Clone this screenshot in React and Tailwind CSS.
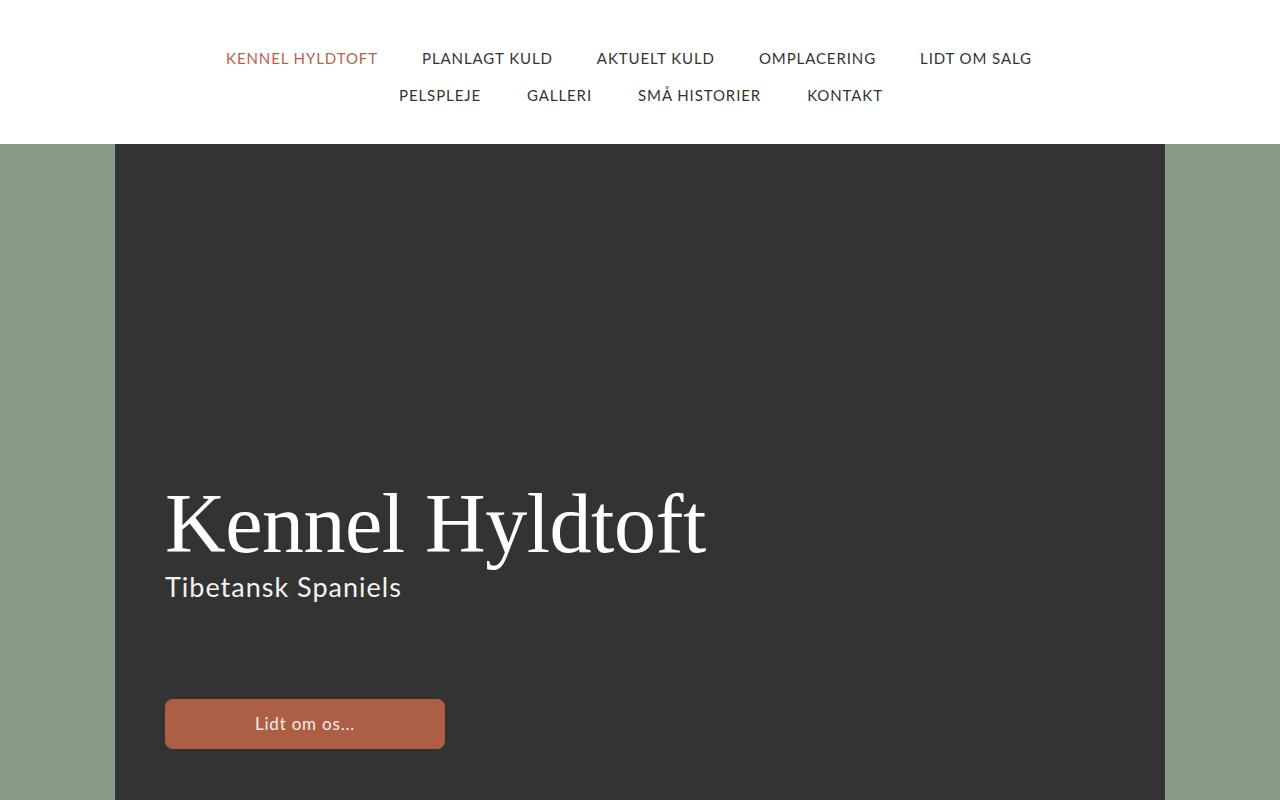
import React from 'react';

const row1 = ['KENNEL HYLDTOFT', 'PLANLAGT KULD', 'AKTUELT KULD', 'OMPLACERING', 'LIDT OM SALG'];
const row2 = ['PELSPLEJE', 'GALLERI', 'SMÅ HISTORIER', 'KONTAKT'];

const NavItem = ({ label, active }) => (
  <a
    href="#"
    className={`text-[15px] leading-[20px] tracking-[0.9px] ${active ? 'text-[#b5634a]' : 'text-[#333333]'}`}
  >
    {label}
  </a>
);

const App = () => {
  return (
    <div className="min-h-screen bg-[#899c88]" style={{ fontFamily: 'Lato, "Noto Sans", sans-serif' }}>
      <header className="bg-white h-[144px] pt-[48px]">
        <nav className="flex flex-col items-center gap-[17px]">
          <div className="flex gap-x-[44px] pr-[22px]">
            {row1.map((l, i) => (
              <NavItem key={l} label={l} active={i === 0} />
            ))}
          </div>
          <div className="flex gap-x-[46px] pl-[2px]">
            {row2.map((l) => (
              <NavItem key={l} label={l} />
            ))}
          </div>
        </nav>
      </header>

      <main className="mx-auto w-[1050px] h-[656px] bg-[#333333] px-[50px] pt-[338px]">
        <h1
          className="text-white text-[84px] leading-[84px] tracking-[-0.5px]"
          style={{ fontFamily: '"Liberation Serif", "DejaVu Serif", serif' }}
        >
          Kennel Hyldtoft
        </h1>
        <p className="text-[#f2f2f2] text-[27px] leading-[32px] tracking-[1px] mt-[5px]">
          Tibetansk Spaniels
        </p>
        <button className="mt-[96px] w-[280px] h-[50px] rounded-[8px] bg-[#ad5f45] text-[#f6eee9] text-[17px] tracking-[0.8px]">
          Lidt om os...
        </button>
      </main>
    </div>
  );
};

export default App;
